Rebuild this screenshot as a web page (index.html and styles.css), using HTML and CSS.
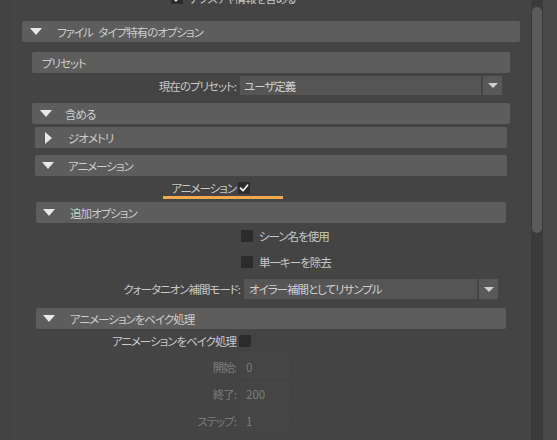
FILE: index.html
```html
<!DOCTYPE html>
<html lang="ja">
<head>
<meta charset="utf-8">
<title>ファイル タイプ特有のオプション</title>
<link rel="stylesheet" href="styles.css">
</head>
<body>
<div class="window">
  <div class="gutter"></div>
  <div class="panel">
    <div class="top-row">
      <span class="check on"><svg viewBox="0 0 12 12"><polyline points="2.5,6.2 5,8.7 9.6,3.2"/></svg></span>
      <span class="check-text">テクスチャ情報を含める</span>
    </div>

    <section class="frame l1">
      <div class="frame-head"><span class="tri down"></span><span class="head-text">ファイル タイプ特有のオプション</span></div>
      <div class="frame-body">

        <section class="frame l2 preset">
          <div class="frame-head plain"><span class="head-text">プリセット</span></div>
          <div class="field preset-row">
            <span class="field-label">現在のプリセット:</span>
            <span class="combo wide"><span class="combo-text">ユーザ定義</span></span>
            <span class="combo-btn"><span class="mini-tri"></span></span>
          </div>
        </section>

        <section class="frame l2 include">
          <div class="frame-head"><span class="tri down"></span><span class="head-text">含める</span></div>
          <div class="frame-body">

            <section class="frame l3 geometry">
              <div class="frame-head"><span class="tri right"></span><span class="head-text">ジオメトリ</span></div>
            </section>

            <section class="frame l3 animation">
              <div class="frame-head"><span class="tri down"></span><span class="head-text">アニメーション</span></div>
              <div class="field anim-row">
                <span class="field-label">アニメーション</span>
                <span class="check on"><svg viewBox="0 0 12 12"><polyline points="2.5,6.2 5,8.7 9.6,3.2"/></svg></span>
              </div>
              <div class="hit-line"></div>

              <section class="frame l4 extra">
                <div class="frame-head"><span class="tri down"></span><span class="head-text">追加オプション</span></div>
                <div class="field check-row first">
                  <span class="check"></span><span class="check-text">シーン名を使用</span>
                </div>
                <div class="field check-row">
                  <span class="check"></span><span class="check-text">単一キーを除去</span>
                </div>
                <div class="field quat-row">
                  <span class="field-label">クォータニオン補間モード:</span>
                  <span class="combo narrow"><span class="combo-text">オイラー補間としてリサンプル</span></span>
                  <span class="combo-btn"><span class="mini-tri"></span></span>
                </div>
              </section>

              <section class="frame l4 bake">
                <div class="frame-head"><span class="tri down"></span><span class="head-text">アニメーションをベイク処理</span></div>
                <div class="field bake-row">
                  <span class="field-label">アニメーションをベイク処理</span>
                  <span class="check"></span>
                </div>
                <div class="field num-row">
                  <span class="field-label dim">開始:</span>
                  <span class="num-box">0</span>
                </div>
                <div class="field num-row">
                  <span class="field-label dim">終了:</span>
                  <span class="num-box">200</span>
                </div>
                <div class="field num-row">
                  <span class="field-label dim">ステップ:</span>
                  <span class="num-box">1</span>
                </div>
              </section>
            </section>

          </div>
        </section>

      </div>
    </section>
  </div>
  <div class="scrollbar"><div class="thumb"></div></div>
  <div class="edge"></div>
</div>
</body>
</html>
```
FILE: styles.css
```css
* { box-sizing: border-box; }

html, body {
  margin: 0;
  padding: 0;
  background: #444444;
}

body {
  font-family: "Noto Sans CJK JP", "Noto Sans", sans-serif;
  font-size: 11.5px;
  letter-spacing: -1px;
  word-spacing: 4px;
  font-feature-settings: "palt";
  color: #c8c8c8;
}

.window {
  display: flex;
  width: 557px;
  height: 440px;
  overflow: hidden;
  background: #444444;
}

.gutter {
  width: 10px;
  flex: none;
  background: #424242;
}

.panel {
  width: 521px;
  flex: none;
  display: flex;
  flex-direction: column;
}

/* scrolled list: the first row sits mostly above the view */
.top-row {
  display: flex;
  align-items: center;
  height: 20px;
  margin-top: -12px;
  padding-left: 161px;
}

.top-row .check-text { margin-left: 6px; }

/* collapsible frames */
.frame { display: flex; flex-direction: column; }

.frame-head {
  display: flex;
  align-items: center;
  height: 21px;
  background: #5d5d5d;
  border-radius: 2px;
  color: #cdcdcd;
  flex: none;
}

.l1 { margin: 13px 11px 0 12px; }
.l2 { margin: 0 10px; }
.l3 { margin: 0 3px; }
.l4 { margin: 0 1px; }

.l1 > .frame-head { padding-left: 8px; }
.l1 > .frame-head .head-text { margin-left: 15px; }

.l2 > .frame-head { padding-left: 8px; }
.l2 > .frame-head .head-text { margin-left: 13px; }
.l2 > .frame-head.plain { padding-left: 10px; }
.l2 > .frame-head.plain .head-text { margin-left: 0; }

.l3 > .frame-head { padding-left: 7px; }
.l3 > .frame-head .head-text { margin-left: 14px; }
.l3 > .frame-head .tri.right { margin-left: 3px; }
.l3 > .frame-head .tri.right + .head-text { margin-left: 16px; }

.l4 > .frame-head { padding-left: 7px; }
.l4 > .frame-head .head-text { margin-left: 15px; }

.preset { margin-top: 10px; }
.include { margin-top: 8px; }
.geometry { margin-top: 3px; }
.animation { margin-top: 7px; }
.extra { margin-top: 3px; }
.bake { margin-top: 9px; }

/* triangles */
.tri {
  display: inline-block;
  width: 0;
  height: 0;
  flex: none;
}

.tri.down {
  border-left: 6px solid transparent;
  border-right: 6px solid transparent;
  border-top: 7px solid #e8e8e8;
}

.tri.right {
  border-top: 6px solid transparent;
  border-bottom: 6px solid transparent;
  border-left: 7px solid #e8e8e8;
}

.mini-tri {
  display: inline-block;
  width: 0;
  height: 0;
  border-left: 5px solid transparent;
  border-right: 5px solid transparent;
  border-top: 5px solid #cfcfcf;
}

/* form rows */
.field {
  display: flex;
  align-items: center;
  flex: none;
}

.field-label {
  text-align: right;
  white-space: nowrap;
  flex: none;
}

.field-label.dim { color: #7b7b7b; }

.preset-row { height: 19px; margin-top: 3px; }
.preset-row .field-label { width: 204px; }
.preset-row .combo { margin-left: 4px; }

.combo {
  display: flex;
  align-items: center;
  height: 19px;
  background: #555555;
  color: #d0d0d0;
  padding-left: 4px;
  flex: none;
}

.combo.wide { width: 241px; }
.combo.narrow { width: 233px; padding-left: 5px; }

.combo-btn {
  display: flex;
  align-items: center;
  justify-content: center;
  width: 19px;
  height: 19px;
  margin-left: 2px;
  background: #585858;
  flex: none;
}

.anim-row { height: 16px; margin-top: 4px; }
.anim-row .field-label { width: 201px; }
.anim-row .check { margin-left: 2px; }

.hit-line {
  width: 120px;
  height: 3px;
  margin-left: 128px;
  background: #f0aa4e;
  flex: none;
}

.check {
  display: inline-flex;
  align-items: center;
  justify-content: center;
  width: 12px;
  height: 12px;
  background: #2b2b2b;
  border-radius: 1px;
  flex: none;
}

.check svg { width: 12px; height: 12px; }

.check polyline {
  fill: none;
  stroke: #f2f2f2;
  stroke-width: 1.7;
  stroke-linecap: round;
  stroke-linejoin: round;
}

.check-row { height: 20px; padding-left: 205px; margin-top: 6px; }
.check-row.first { margin-top: 3px; }
.check-row .check-text { margin-left: 6px; }

.quat-row { height: 20px; margin-top: 7px; }
.quat-row .field-label { width: 204px; }
.quat-row .combo { margin-left: 4px; height: 20px; }
.quat-row .combo-btn { height: 20px; }

.bake-row { height: 20px; margin-top: 2px; }
.bake-row .field-label { width: 200px; }
.bake-row .check { margin-left: 3px; }

.num-row { height: 21px; margin-top: 6px; }
.num-row:nth-child(3) { margin-top: 5px; }
.num-row .field-label { width: 200px; }

.num-box {
  display: flex;
  align-items: center;
  width: 48px;
  height: 21px;
  margin-left: 5px;
  padding-left: 5px;
  background: #454545;
  box-shadow: inset 0 0 0 1px #474747;
  color: #7e7e7e;
  letter-spacing: 0;
}

/* scroll bar */
.scrollbar {
  width: 12px;
  flex: none;
  background: #3a3a3a;
  padding: 7px 1px 0 1px;
}

.thumb {
  height: 226px;
  border-radius: 5px;
  background: #5b5b5b;
}

.edge {
  flex: 1;
  background: #484848;
}
```
